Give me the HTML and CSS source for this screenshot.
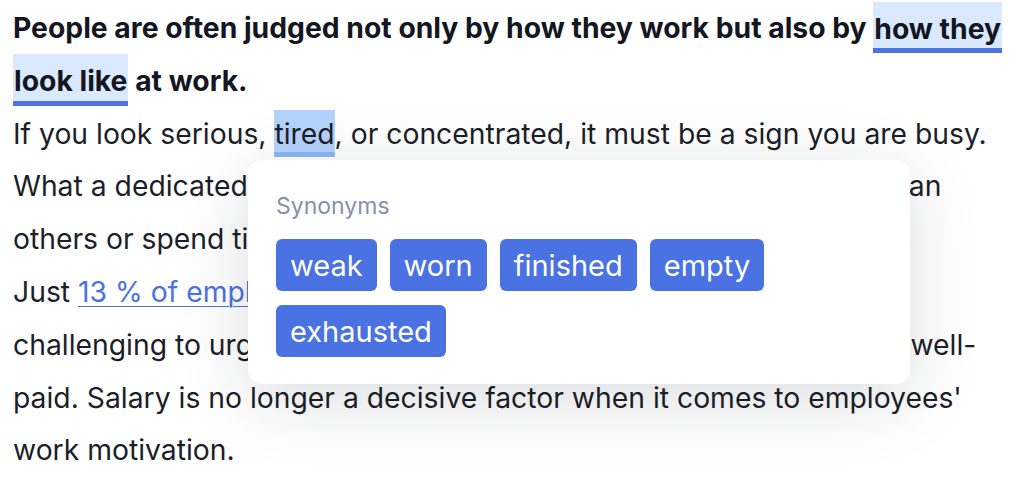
FILE: index.html
```html
<!DOCTYPE html>
<html lang="en">
<head>
    <meta charset="UTF-8">
    <meta name="viewport" content="width=device-width, initial-scale=1.0">
    <title>Synonyms</title>
    <link rel="stylesheet" href="styles.css">
</head>
<body>
    <div class="editor">
        <p class="lead">People are often judged not only by how they work but also by <span class="mark">how they</span><br><span class="mark">look like</span> at work.</p>
        <p class="text">If you look serious, <span class="mark active">tired</span>, or concentrated, it must be a sign you are busy.<br>What a dedicated <span class="spread-s">employee! They must work longer and harder</span> than<br>others or spend time at the office after hours.<br>Just <a href="#" class="link">13 % of employees</a> feel engaged at work. It's becoming<br>challenging to urge <span class="spread-l">people to work much harder, even if they are</span> well-<br>paid. Salary is no longer a decisive factor when it comes to employees'<br>work motivation.</p>

        <div class="popup">
            <div class="popup-label">Synonyms</div>
            <div class="chips">
                <button class="chip">weak</button>
                <button class="chip">worn</button>
                <button class="chip">finished</button>
                <button class="chip">empty</button>
                <button class="chip">exhausted</button>
            </div>
        </div>
    </div>
</body>
</html>
```

FILE: styles.css
```css
body {
    margin: 0;
    padding: 0;
    background: #fff;
    font-family: Inter, "Noto Sans", sans-serif;
    color: #1c1f2a;
}
.editor {
    position: relative;
    padding: 2px 13px 0;
    font-size: 28.3px;
    line-height: 52.8px;
}
.editor p {
    margin: 0;
    white-space: nowrap;
}
.lead {
    font-weight: 700;
    color: #141722;
}
.spread-s {
    word-spacing: 2px;
}
.spread-l {
    word-spacing: 3.4px;
}
.mark {
    background: #dae9fe;
    padding: 9.5px 1px 3px;
    border-bottom: 5px solid #4d73e0;
}
.mark.active {
    background: #b4d3fc;
    padding: 7px 0 1px;
    border-bottom: 5px solid #8cb6f6;
}
.link {
    color: #4a72e2;
    text-decoration: underline;
    text-underline-offset: 4px;
    text-decoration-thickness: 1px;
}
.popup {
    position: absolute;
    left: 248px;
    top: 160px;
    width: 606px;
    padding: 32px 28px 27px;
    background: #fff;
    border-radius: 14px;
    box-shadow: 0 16px 70px rgba(20, 24, 40, 0.15);
}
.popup-label {
    font-size: 23px;
    line-height: 28px;
    color: #8591ad;
    margin-bottom: 19px;
}
.chips {
    display: flex;
    flex-wrap: wrap;
    gap: 14px 13px;
}
.chip {
    font-family: Inter, "Noto Sans", sans-serif;
    font-size: 29px;
    height: 52px;
    padding: 0 14px;
    border: none;
    border-radius: 6px;
    background: #4a72e2;
    color: #fff;
    cursor: pointer;
}
```
